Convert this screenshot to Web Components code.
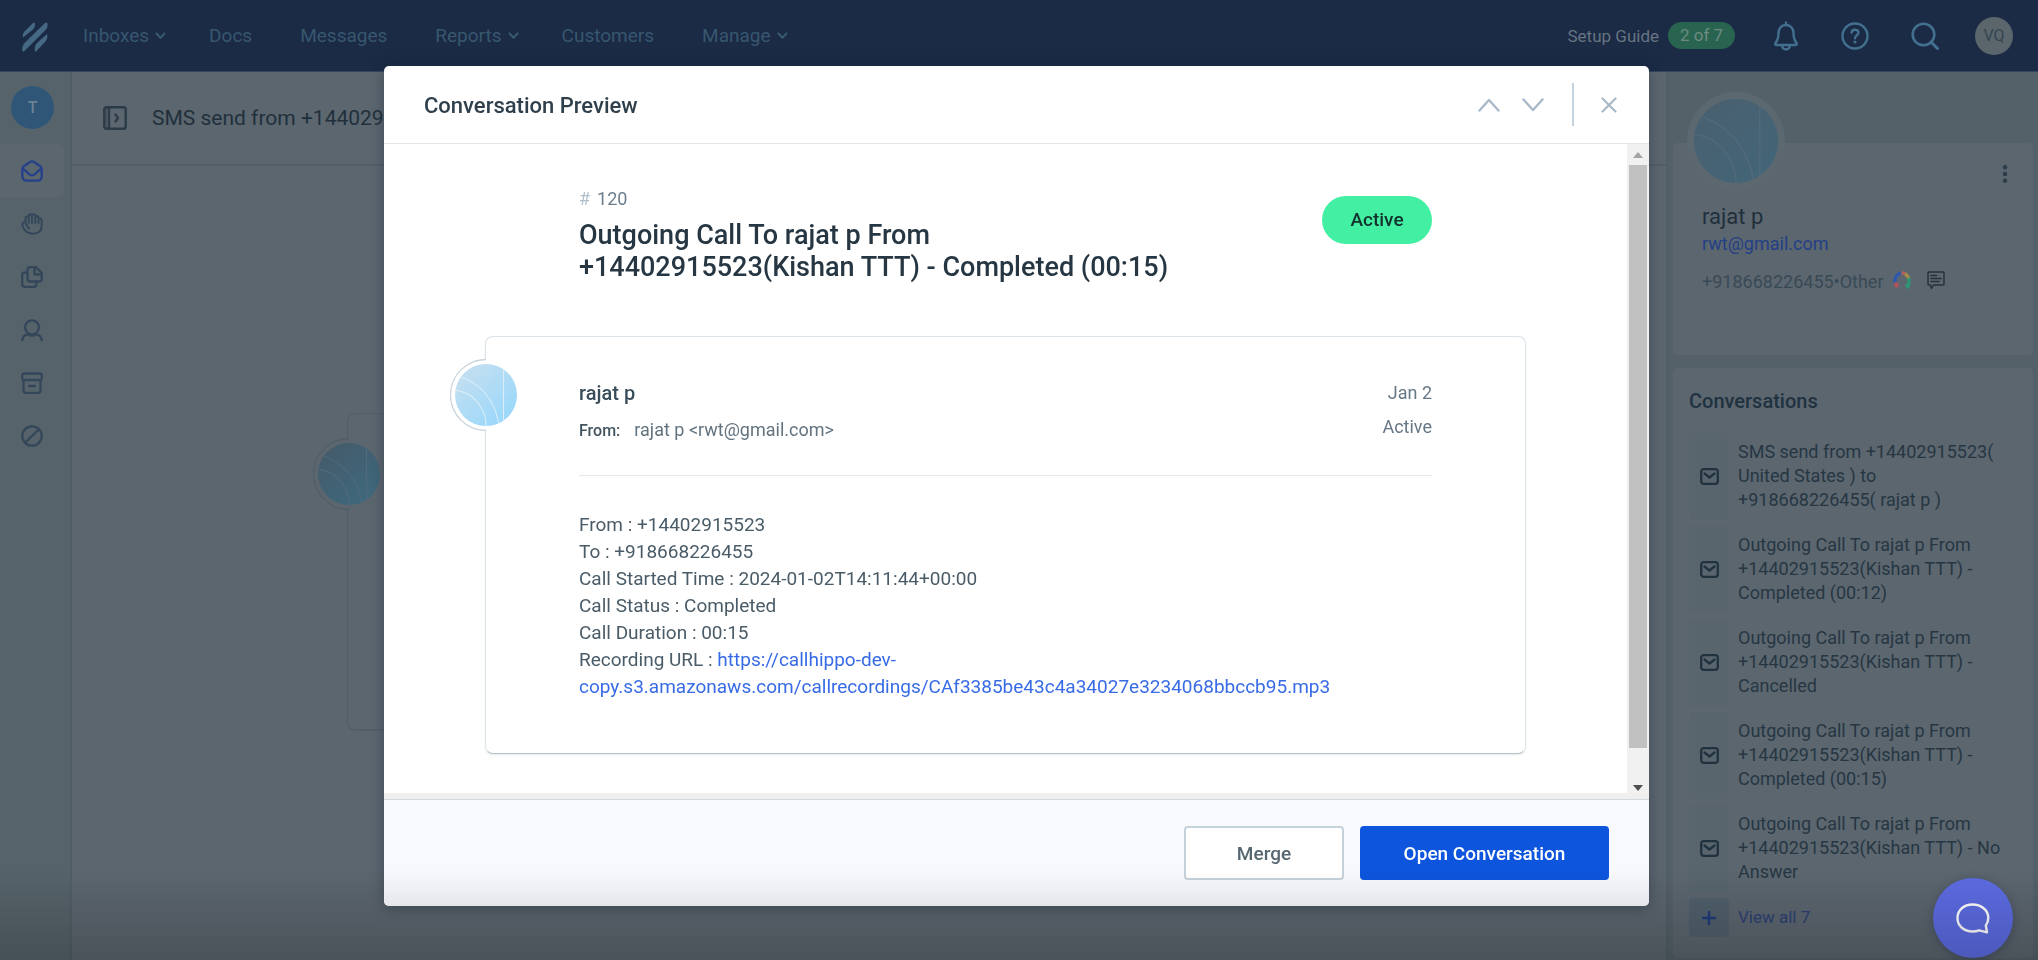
<!DOCTYPE html>
<html lang="en">
<head>
<meta charset="utf-8">
<title>Conversation Preview</title>
<style>
  html, body { margin: 0; height: 100%; }
  body {
    font-family: Roboto, "Liberation Sans", sans-serif;
    font-size: 18px;
    color: #22333f;
    background: #5c666f;
  }
</style>
</head>
<body>
<help-app></help-app>

<script>
const ICONS = {
  logo: ['0 0 26 30', '<g fill="currentColor"><path d="M1 15.500Q0 12 2.500 9.500L11 1Q13 -.5 13 2Q13.500 5 11 7.500Z"/><path d="M2 29.500Q0 30 .3 27Q0 23.500 2.500 21L23 1Q25.800 -.5 25.500 2.500Q26 5.500 23.500 8Z"/><path d="M14 29.500Q12.500 30 12.800 27Q12.500 23.500 15 21L25 12Q26.300 16 23.500 19.500Z"/></g>'],
  caret: ['0 0 11 8', '<path d="M1.500 1.500L5.500 5.800L9.500 1.500" stroke-width="2.200"/>'],
  bell: ['0 0 26 30', '<path d="M13 1.500V4M13 4C8 4 5.500 8 5.500 12C5.500 18 4.500 19.500 2.500 22Q1.500 24 4 24H22Q24.500 24 23.500 22C21.500 19.500 20.500 18 20.500 12C20.500 8 18 4 13 4Z" stroke-width="2.400"/><path d="M9 25Q10 28.500 13 28.500T17 25" stroke-width="2.400"/>'],
  help: ['0 0 28 28', '<circle cx="14" cy="14" r="12.500" stroke-width="2.400"/><path d="M10.500 10.700Q10.800 7.800 14 7.800T17.500 10.800C17.500 13.300 14 13.300 14 16.300" stroke-width="2.400"/><circle cx="14" cy="20" r="1.600" fill="currentColor" stroke="none"/>'],
  search: ['0 0 28 28', '<circle cx="12.500" cy="12.500" r="10.800" stroke-width="2.600"/><path d="M20 20L26.500 26.500" stroke-width="3"/>'],
  mailopen: ['0 0 22 22', '<path d="M1.300 9Q1.300 7.500 2.500 6.500L9 2Q11 .7 13 2L19.500 6.500Q20.700 7.500 20.700 9V16Q20.700 20.700 16 20.700H6Q1.300 20.700 1.300 16ZM1.800 8.500L8.500 14.300Q11 16.300 13.500 14.300L20.200 8.500" stroke-width="2.300"/>'],
  hand: ['0 0 22 22', '<path d="M4.500 10V5.500Q4.500 3.500 6 3.500T7.700 5M7.700 10V3Q7.700 1.300 9.300 1.300T11 3M11 10V2.700Q11 1.300 12.700 1.300T14.300 3M14.300 10V3.500Q15 2.500 16.300 3T17.500 5.500V10M17.500 6.500Q18 4.500 19.500 5.500T20.700 9V12.500Q20.700 20.700 12 20.700Q4.500 20.700 1.500 13V10.500Q2 8.700 4 9.500L8 15.500" stroke-width="2"/>'],
  pages: ['0 0 22 22', '<path d="M5 6.500H4Q1.200 6.500 1.200 9V18Q1.200 20.800 4 20.800H13Q15.500 20.800 15.500 18V16.500M9 1.200H15L20.800 7V13Q20.800 15.500 18 15.500H9.500Q6.500 15.500 6.500 13V4Q6.500 1.200 9 1.200ZM13.500 2V8.500H20" stroke-width="2.300"/>'],
  person: ['0 0 22 22', '<circle cx="11" cy="8.300" r="7" stroke-width="2.300"/><path d="M1.300 21.500Q1.800 16 6.500 15.300Q11 18 15.500 15.300Q20.200 16 20.700 21.500" stroke-width="2.300"/>'],
  archive: ['0 0 22 22', '<rect x="1.200" y="1.500" width="19.600" height="6.500" rx="2" stroke-width="2.300"/><path d="M2.500 8.500V18Q2.500 20.800 5 20.800H17Q19.500 20.800 19.500 18V8.500M8 14H14" stroke-width="2.300"/>'],
  ban: ['0 0 22 22', '<circle cx="11" cy="11" r="9.700" stroke-width="2.300"/><path d="M4.500 17.500L17.500 4.500" stroke-width="2.300"/>'],
  panel: ['0 0 24 24', '<rect x="1.300" y="1.300" width="21.400" height="21.400" rx="2" stroke-width="2.400"/><path d="M6 1.500V22.500M12.500 8.500L15 12L12.500 15.500" stroke-width="2.300"/><path d="M3.500 2V22" stroke-width="1.500" opacity=".5"/>'],
  up: ['0 0 22 14', '<path d="M1.500 12.500L11 2L20.500 12.500" stroke-width="2.400"/>'],
  down: ['0 0 22 14', '<path d="M1.500 1.500L11 12L20.500 1.500" stroke-width="2.400"/>'],
  close: ['0 0 16 16', '<path d="M1.500 1.500L14.500 14.500M14.500 1.500L1.500 14.500" stroke-width="2.200"/>'],
  dots: ['0 0 6 18', '<g fill="currentColor" stroke="none"><circle cx="3" cy="2.300" r="2.200"/><circle cx="3" cy="9" r="2.200"/><circle cx="3" cy="15.700" r="2.200"/></g>'],
  mail: ['0 0 19 17', '<rect x="1.200" y="1.200" width="16.600" height="14.600" rx="2.500" stroke-width="2.300"/><path d="M4.500 5.500L9.500 9.500L14.500 5.500" stroke-width="2.300"/>'],
  plus: ['0 0 14 14', '<path d="M7 1V13M1 7H13" stroke-width="2.500"/>'],
  sms: ['0 0 18 19', '<path d="M2 1H16Q17 1 17 2V13Q17 14 16 14H6.500L4.500 17.500L3.500 14H2Q1 14 1 13V2Q1 1 2 1ZM4 4.500H9.500M4 7.500H14M4 10.500H12" stroke-width="1.500"/>'],
  hippo: ['0 0 18 18', '<g stroke-width="3.400" stroke-linecap="butt"><path d="M2.200 12.500Q1 8 3.800 4.500Q6 2.200 9 2" stroke="#2f58ad"/><path d="M8.200 2.100Q10.500 1.900 12.500 3.200" stroke="#b0605a"/><path d="M12 2.800Q15 4.500 15.700 8" stroke="#a58c4c"/><path d="M15.500 7Q16.500 10.500 15.300 15" stroke="#2f9675"/></g><path d="M.8 12L3.500 11L6.500 13.500L3.500 17.500Q1 16 .8 12Z" fill="#b0525a" stroke="none"/><path d="M12 13.500L15 12.500L17 14L16.500 17.500H13.500Z" fill="#2f9675" stroke="none"/>'],
  chat: ['0 0 34 31', '<path d="M16.500 1.500C8 1.500 1.500 7 1.500 15S8 28.500 16.500 28.500Q20.500 28.500 23 27.300L31 29.300L29.800 22.500Q32.300 19 32.300 15C32.300 7 25 1.500 16.500 1.500Z" stroke-width="2.400"/>']
};

class UiIcon extends HTMLElement {
  connectedCallback() {
    const [box, body] = ICONS[this.getAttribute('name')];
    const [, , w, h] = box.split(' ');
    this.attachShadow({ mode: 'open' }).innerHTML = `
      <style>:host{display:inline-flex;flex:none} svg{display:block}</style>
      <svg width="${w}" height="${h}" viewBox="${box}" fill="none" stroke="currentColor" stroke-linecap="round" stroke-linejoin="round" aria-hidden="true">${this.getAttribute('name') === 'logo' ? body.replace('<g', '<g stroke="none"') : body}</svg>`;
  }
}
customElements.define('ui-icon', UiIcon);

/* Round patterned avatar; "ring" adds the outline that joins a card's left edge. */
let avatarCount = 0;
class PatternAvatar extends HTMLElement {
  connectedCallback() {
    const id = 'disc' + (++avatarCount);
    const edge = this.hasAttribute('ring')
      ? '<path d="M36 .5A35.500 35.500 0 0 0 36 71.500" fill="none" stroke="var(--ring-line)" stroke-width="1.300"/>' : '';
    this.attachShadow({ mode: 'open' }).innerHTML = `
      <style>:host{display:block;width:72px;height:72px} svg{display:block;width:100%;height:100%}</style>
      <svg viewBox="0 0 72 72" aria-hidden="true">
        <defs>
          <linearGradient id="${id}" x1=".2" y1="0" x2=".9" y2=".8">
            <stop offset="0" stop-color="var(--disc-from)"/><stop offset="1" stop-color="var(--disc-to)"/>
          </linearGradient>
          <clipPath id="${id}c"><circle cx="36" cy="36" r="31"/></clipPath>
        </defs>
        <circle cx="36" cy="36" r="36" fill="var(--disc-rim)"/>${edge}
        <circle cx="36" cy="36" r="31" fill="url(#${id})"/>
        <g clip-path="url(#${id}c)" fill="none" stroke="var(--disc-line)" stroke-width="1.100">
          <path d="M5 17Q22 20 34 33T49 66"/><path d="M3 31Q19 32 28 44T36 68"/><path d="M53.500 4V68"/>
        </g>
      </svg>`;
  }
}
customElements.define('pattern-avatar', PatternAvatar);

class TopBar extends HTMLElement {
  connectedCallback() {
    this.attachShadow({ mode: 'open' }).innerHTML = `
      <style>
        :host{display:flex;align-items:center;justify-content:space-between;box-sizing:border-box;height:72px;padding:0 25px 0 22px;background:#1b2a45;border-bottom:1px solid #34455f;color:#37576f}
        nav{display:flex;align-items:center;gap:43px;font-size:19px;line-height:24px}
        a{color:inherit;text-decoration:none;display:flex;align-items:center;gap:6px;padding-right:5px}
        a.more{padding-right:0}
        .home{color:#456983;padding:2px 0 0;margin-right:-8px}
        .tools{display:flex;align-items:center;gap:42px;color:#42708e}
        .guide{display:flex;align-items:center;gap:9px;font-size:17px;color:#667482;padding:0;margin-right:-4px}
        .count{background:#28644f;color:#6f8a83;border-radius:14px;line-height:27px;width:67px;text-align:center;font-size:17px}
        button{border:0;background:none;padding:0;color:inherit;font:inherit;display:flex}
        .me{width:38px;height:38px;border-radius:50%;background:#5b666c;color:#34454f;font-size:16px;align-items:center;justify-content:center;margin-left:-6px}
      </style>
      <nav aria-label="Main">
        <a class="home" href="#" aria-label="Home"><ui-icon name="logo"></ui-icon></a>
        <a class="more" href="#">Inboxes<ui-icon name="caret"></ui-icon></a>
        <a href="#">Docs</a>
        <a href="#">Messages</a>
        <a class="more" href="#">Reports<ui-icon name="caret"></ui-icon></a>
        <a href="#">Customers</a>
        <a class="more" href="#">Manage<ui-icon name="caret"></ui-icon></a>
      </nav>
      <div class="tools">
        <a class="guide" href="#">Setup Guide <span class="count">2 of 7</span></a>
        <button aria-label="Notifications"><ui-icon name="bell"></ui-icon></button>
        <button aria-label="Help"><ui-icon name="help"></ui-icon></button>
        <button aria-label="Search"><ui-icon name="search"></ui-icon></button>
        <button class="me">VQ</button>
      </div>`;
  }
}
customElements.define('top-bar', TopBar);

class SideRail extends HTMLElement {
  connectedCallback() {
    const items = [['mailopen', 'Unassigned'], ['hand', 'Mine'], ['pages', 'Drafts'], ['person', 'Assigned'], ['archive', 'Closed'], ['ban', 'Spam']];
    this.attachShadow({ mode: 'open' }).innerHTML = `
      <style>
        :host{display:block;box-sizing:border-box;background:#56636a;border-right:2px solid #505e67;padding-top:14px;color:#34475a}
        .box{width:43px;height:43px;margin:0 0 15px 11px;border:0;padding:0;border-radius:50%;background:#2f5677;color:#6a8496;font:500 16px Roboto,sans-serif;display:block}
        a{display:flex;align-items:center;justify-content:center;width:64px;height:53px;color:inherit;border-radius:0 6px 6px 0}
        a.on{background:#5c666f;color:#24418a}
      </style>
      <button class="box">T</button>
      <nav aria-label="Folders">${items.map(([n, l], i) => `<a href="#" aria-label="${l}"${i ? '' : ' class="on"'}><ui-icon name="${n}"></ui-icon></a>`).join('')}</nav>`;
  }
}
customElements.define('side-rail', SideRail);

class ThreadView extends HTMLElement {
  connectedCallback() {
    this.attachShadow({ mode: 'open' }).innerHTML = `
      <style>
        :host{display:block;background:#5c666f;--disc-from:#445b6a;--disc-to:#3f687d;--disc-rim:#5c666f;--disc-line:#506a79;--ring-line:#505f69}
        header{display:flex;align-items:center;gap:25px;height:94px;box-sizing:border-box;padding:0 31px;border-bottom:2px solid #525f68;color:#2b3c48}
        h1{margin:0;font:400 21px/28px Roboto,sans-serif;color:#1f303c;white-space:nowrap}
        .card{position:relative;margin:247px 275px 0;height:315px;border:1px solid #515f69;border-bottom-width:2px;border-radius:8px}
        pattern-avatar{position:absolute;left:-35px;top:24px}
      </style>
      <header><ui-icon name="panel"></ui-icon><h1>SMS send from +14402915523</h1></header>
      <div class="card"><pattern-avatar ring></pattern-avatar></div>`;
  }
}
customElements.define('thread-view', ThreadView);

class ConversationLink extends HTMLElement {
  connectedCallback() {
    this.attachShadow({ mode: 'open' }).innerHTML = `
      <style>
        :host{display:block}
        a{display:grid;grid-template-columns:40px 1fr;gap:9px;align-items:stretch;color:#263743;text-decoration:none;line-height:24px;min-height:39px}
        .tile{display:flex;align-items:center;justify-content:center;background:#58656d;border-radius:4px;color:#21323f}
        .text{padding:7px 0 8px}
        :host([action]) a{color:#2c4073;font-size:17px}
        :host([action]) .tile{background:#51606c;color:#203a7c}
      </style>
      <a href="#"><span class="tile"><ui-icon name="${this.hasAttribute('action') ? 'plus' : 'mail'}"></ui-icon></span><span class="text"><slot></slot></span></a>`;
  }
}
customElements.define('conversation-link', ConversationLink);

class CustomerPanel extends HTMLElement {
  connectedCallback() {
    this.attachShadow({ mode: 'open' }).innerHTML = `
      <style>
        :host{display:flex;flex-direction:column;gap:13px;box-sizing:border-box;background:#546169;border-left:2px solid #505e67;padding:71px 5px 2px 5px;--disc-from:#496070;--disc-to:#436577;--disc-rim:#5c6870;--disc-line:#516979}
        section{background:#5c666f;border-radius:5px;position:relative;box-sizing:border-box}
        .who{height:212px;padding:59px 29px 0}
        pattern-avatar{position:absolute;left:14px;top:-51px;width:98px;height:98px}
        .menu{position:absolute;right:25px;top:22px;border:0;background:none;padding:0;color:#2c3d4a;display:flex}
        h2{margin:0;font:400 22px/30px Roboto,sans-serif;color:#1f303c}
        .mail{display:block;color:#233f86;text-decoration:none;line-height:24px}
        .phone{display:flex;align-items:center;margin-top:13px;line-height:26px;color:#384a56}
        .phone ui-icon{margin:-4px 0 0 9px;color:#25323c}
        .phone ui-icon + ui-icon{margin-left:16px}
        .list{flex:1;padding:19px 16px 20px;display:flex;flex-direction:column;gap:6px}
        h3{margin:0 0 12px;font:500 20px/28px Roboto,sans-serif;color:#203240}
      </style>
      <section class="who">
        <pattern-avatar></pattern-avatar>
        <button class="menu" aria-label="Customer menu"><ui-icon name="dots"></ui-icon></button>
        <h2>rajat p</h2>
        <a class="mail" href="#">rwt@gmail.com</a>
        <div class="phone">+918668226455•Other<ui-icon name="hippo"></ui-icon><ui-icon name="sms"></ui-icon></div>
      </section>
      <section class="list">
        <h3>Conversations</h3>
        <conversation-link>SMS send from +14402915523( United States ) to +918668226455( rajat p )</conversation-link>
        <conversation-link>Outgoing Call To rajat p From +14402915523(Kishan TTT) - Completed (00:12)</conversation-link>
        <conversation-link>Outgoing Call To rajat p From +14402915523(Kishan TTT) - Cancelled</conversation-link>
        <conversation-link>Outgoing Call To rajat p From +14402915523(Kishan TTT) - Completed (00:15)</conversation-link>
        <conversation-link>Outgoing Call To rajat p From +14402915523(Kishan TTT) - No Answer</conversation-link>
        <conversation-link action>View all 7</conversation-link>
      </section>`;
  }
}
customElements.define('customer-panel', CustomerPanel);

class MessageCard extends HTMLElement {
  connectedCallback() {
    this.attachShadow({ mode: 'open' }).innerHTML = `
      <style>
        :host{display:block;position:relative;box-sizing:border-box;border:1px solid #dde4e9;border-bottom-color:#b5c1c5;border-radius:8px;box-shadow:0 1px 2px rgba(60,80,90,.12);padding:42px 93px 53px;color:#44566a;--disc-from:#c5dff0;--disc-to:#9bd8fa;--disc-rim:#fff;--disc-line:#d9edf9;--ring-line:#cbd5dc}
        pattern-avatar{position:absolute;left:-36px;top:22px}
        header{display:flex;justify-content:space-between;padding-bottom:31px;border-bottom:1px solid #e3e8ea;margin-bottom:35px}
        h3{margin:0 0 10px;font:500 20px/28px Roboto,sans-serif;color:#394d5b}
        .from{display:flex;gap:14px;align-items:baseline;line-height:26px;color:#62737f}
        .from b{font-weight:500;font-size:16px;color:#42545f}
        .meta{text-align:right;line-height:26px;color:#667786;padding-top:1px;display:flex;flex-direction:column;gap:8px}
        .text{font-size:19px;line-height:27px;color:#4a5c68}
      </style>
      <pattern-avatar ring></pattern-avatar>
      <header>
        <div><h3><slot name="name"></slot></h3><div class="from"><b>From:</b><slot name="from"></slot></div></div>
        <div class="meta"><slot name="date"></slot><slot name="status"></slot></div>
      </header>
      <div class="text"><slot></slot></div>`;
  }
}
customElements.define('message-card', MessageCard);

class PreviewDialog extends HTMLElement {
  connectedCallback() {
    this.attachShadow({ mode: 'open' }).innerHTML = `
      <style>
        :host{display:block;background:#fff;border-radius:5px;overflow:hidden;box-shadow:0 2px 14px rgba(20,35,50,.4)}
        button{font:inherit;cursor:pointer}
        .head{display:flex;align-items:center;height:78px;box-sizing:border-box;padding:0 32px 0 40px;border-bottom:1px solid #e3e6e8;color:#a8bac9}
        h1{margin:0 auto 0 0;padding-top:2px;font:500 22px/30px Roboto,sans-serif;color:#2f404c}
        .head button{border:0;background:none;padding:0;color:inherit;display:flex;margin-right:22px}
        .line{width:2px;height:43px;background:#c5d3de;margin:0 27px 0 6px}
        .head .x{margin-right:0}
        .x{padding-right:1px}
        .body{display:grid;grid-template-columns:1fr 22px}
        .scroll{padding:44px 101px 39px}
        .intro{display:flex;justify-content:space-between;align-items:flex-start;padding:0 94px;margin-bottom:53px}
        .num{line-height:22px;color:#6c7d8b;margin-bottom:9px}
        .num i{font-style:normal;color:#afbfcd;margin-right:7px}
        h2{margin:0;max-width:610px;font:500 27px/32px Roboto,sans-serif;color:#263743}
        .pill{background:#43f0a3;color:#13322c;border-radius:24px;width:110px;line-height:48px;font-size:19px;font-weight:500;text-align:center;margin-top:8px}
        .bar{background:#f1f1f1;display:flex;flex-direction:column;align-items:center;justify-content:space-between}
        .bar i{width:0;height:0;border:5px solid transparent}
        .bar .u{border-bottom:6px solid #a3a3a3;border-top:0;margin:8px 0 7px}
        .bar .d{border-top:6px solid #505050;border-bottom:0;margin:37px 0 2px}
        .thumb{flex:1;width:18px;background:#c1c1c1}
        .edge{height:6px;background:#efefef;box-sizing:border-box}
        .foot{display:flex;justify-content:flex-end;gap:16px;padding:26px 40px;background:#f8f9fd;border-top:1px solid #d3dadf;font-size:19px;font-weight:500}
        .foot button{height:54px;border-radius:4px;box-sizing:border-box;width:160px;border:2px solid #c5d2db;background:#fff;color:#566771;padding:0}
        .foot .go{width:249px;border:0;background:#0d55dc;color:#fff}
        a{color:#386be6;text-decoration:none}
      </style>
      <div class="head">
        <h1>Conversation Preview</h1>
        <button aria-label="Previous"><ui-icon name="up"></ui-icon></button>
        <button aria-label="Next"><ui-icon name="down"></ui-icon></button>
        <span class="line"></span>
        <button class="x" aria-label="Close"><ui-icon name="close"></ui-icon></button>
      </div>
      <div class="body">
        <div class="scroll">
          <div class="intro">
            <div><div class="num"><i>#</i>120</div><h2>Outgoing Call To rajat p From +14402915523(Kishan TTT) - Completed (00:15)</h2></div>
            <span class="pill">Active</span>
          </div>
          <message-card>
            <span slot="name">rajat p</span><span slot="from">rajat p &lt;rwt@gmail.com&gt;</span>
            <span slot="date">Jan 2</span><span slot="status">Active</span>
            From : +14402915523<br>To : +918668226455<br>Call Started Time : 2024-01-02T14:11:44+00:00<br>Call Status : Completed<br>Call Duration : 00:15<br>Recording URL : <a href="#">https://callhippo-dev-<wbr>copy.s3.amazonaws.com/callrecordings/CAf3385be43c4a34027e3234068bbccb95.mp3</a>
          </message-card>
        </div>
        <div class="bar" aria-hidden="true"><i class="u"></i><span class="thumb"></span><i class="d"></i></div>
      </div>
      <div class="edge"></div>
      <div class="foot"><button>Merge</button><button class="go">Open Conversation</button></div>`;
  }
}
customElements.define('preview-dialog', PreviewDialog);

class HelpApp extends HTMLElement {
  connectedCallback() {
    this.attachShadow({ mode: 'open' }).innerHTML = `
      <style>
        :host{display:grid;grid-template-rows:auto 1fr;min-height:100vh}
        .work{display:grid;grid-template-columns:72px 1fr 372px}
        .over{position:fixed;inset:0 5px 0 0;display:flex;justify-content:center;align-items:flex-start;padding-top:66px}
        preview-dialog{width:calc(100% - 80px);max-width:1265px}
        .chat{position:fixed;right:25px;bottom:2px;width:80px;height:80px;border:0;border-radius:50%;background:#5d6ce3;color:#fff;display:flex;align-items:center;justify-content:center;padding:0;box-shadow:0 2px 10px rgba(20,30,60,.3)}
        .fade{position:fixed;inset:auto 0 0 0;height:90px;background:linear-gradient(transparent,rgba(0,0,0,.18));pointer-events:none}
      </style>
      <top-bar></top-bar>
      <div class="work"><side-rail></side-rail><thread-view></thread-view><customer-panel></customer-panel></div>
      <div class="over"><preview-dialog role="dialog" aria-label="Conversation Preview"></preview-dialog></div>
      <button class="chat" aria-label="Open chat"><ui-icon name="chat"></ui-icon></button>
      <div class="fade"></div>`;
  }
}
customElements.define('help-app', HelpApp);
</script>
</body>
</html>
